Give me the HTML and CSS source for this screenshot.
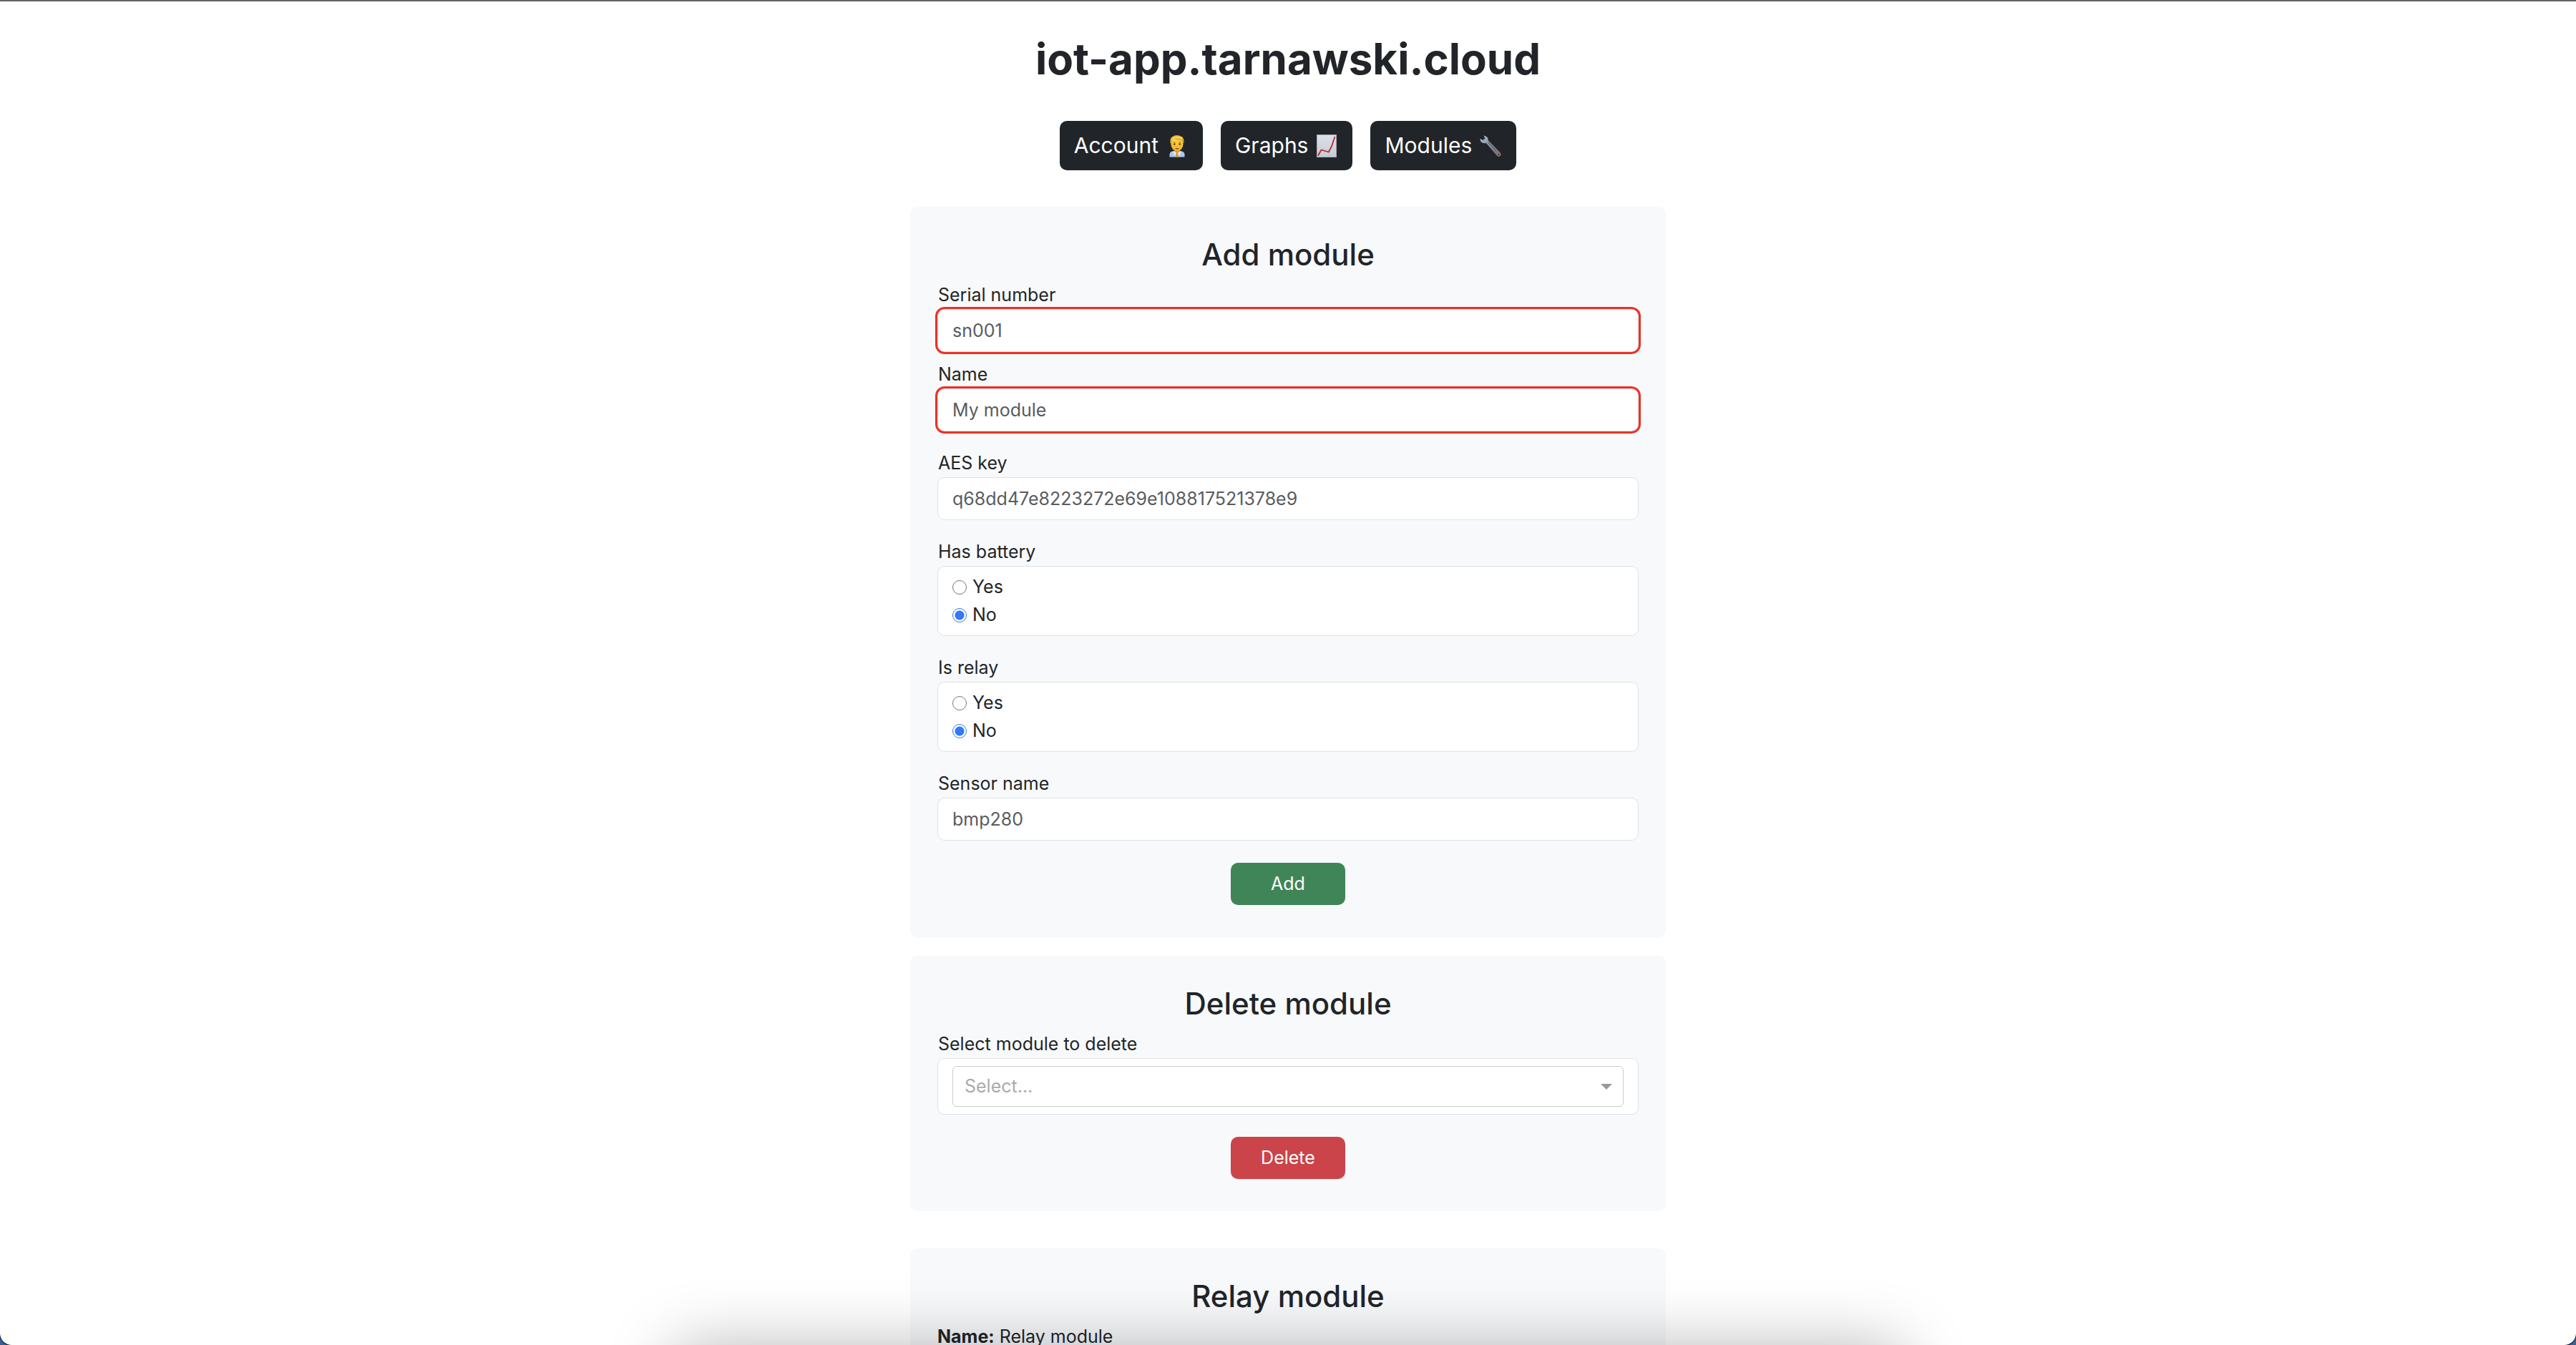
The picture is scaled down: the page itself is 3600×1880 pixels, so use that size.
FILE: index.html
```html
<!DOCTYPE html>
<html lang="en">
<head>
<meta charset="utf-8">
<title>iot-app.tarnawski.cloud</title>
<link rel="stylesheet" href="styles.css">
</head>
<body>
<div class="page">
  <header class="header">
    <h1 class="title">iot-app.tarnawski.cloud</h1>
    <nav class="nav">
      <a class="nav-link" href="#account">Account
        <svg class="emoji" viewBox="0 0 32 32" aria-hidden="true">
          <defs><linearGradient id="face" x1="0" y1="0" x2="0" y2="1"><stop offset="0" stop-color="#ffdc50"/><stop offset="1" stop-color="#efaa22"/></linearGradient></defs>
          <path d="M5.5 31.500v-3.500q0-4 5-4.800h11q5 .8 5 4.800v3.500z" fill="#a9c8ed"/>
          <path d="M12.500 20h7v4.500l-3.500 3-3.500-3z" fill="#d99a20"/>
          <ellipse cx="16" cy="13.500" rx="8.500" ry="10" fill="url(#face)"/>
          <path d="M6.800 13Q5.500 5 9.500 3q5.500-4 13 0 4 2.500 2.700 10l-1.500-4.500q-8 .5-12-2.500-2.500 2-3.200 4.500z" fill="#e8b632"/>
          <path d="M9 6.500q6-5 14-1" stroke="#f9dc78" stroke-width="1.500" fill="none"/>
          <path d="M10.500 11.200q1.500-1 3 0M18.500 11.200q1.500-1 3 0" stroke="#a36f16" fill="none"/>
          <circle cx="12.300" cy="13.500" r="1.200" fill="#40311e"/><circle cx="19.700" cy="13.500" r="1.200" fill="#40311e"/>
          <path d="M13 19.500q3-1 6 0-3 1.800-6 0z" fill="#7e4216"/>
          <path d="M11.500 23l4.500 3.500-3 3.500-3-5.500zM20.500 23L16 26.500l3 3.500 3-5.500z" fill="#dceaff"/>
          <path d="M14.800 26h2.400l1 5.500h-4.400z" fill="#d69b25"/>
        </svg>
      </a>
      <a class="nav-link" href="#graphs">Graphs
        <svg class="emoji" viewBox="0 0 32 32" aria-hidden="true">
          <defs><linearGradient id="paper" x1="0" y1="0" x2="0" y2="1"><stop offset="0" stop-color="#dde2ea"/><stop offset="1" stop-color="#c3c9d2"/></linearGradient></defs>
          <rect x="2.500" y=".5" width="27" height="31" fill="url(#paper)" stroke="#a3a9b3"/>
          <path d="M9.200 1v30M16 1v30M22.800 1v30M3 8.500h26M3 16h26M3 23.500h26" stroke="#d3dae4" stroke-width=".6"/>
          <path d="M4 29.500l4.500-8 10.500 3 4-8L27.500 3" fill="none" stroke="#bd2823" stroke-width="1.800"/>
        </svg>
      </a>
      <a class="nav-link" href="#modules">Modules
        <svg class="emoji" viewBox="0 0 32 32" aria-hidden="true">
          <defs><linearGradient id="steel" x1="0" y1="0" x2="1" y2="1"><stop offset="0" stop-color="#a9bccd"/><stop offset=".55" stop-color="#858b95"/><stop offset="1" stop-color="#76645f"/></linearGradient></defs>
          <path d="M6.500 1.200l4.500 2q2 1.500 1.800 5l17 17.300q1.800 2.500-.3 4.800-2.500 1.700-4.700-.8L10 12q-5 1-7.500-2L1 6l4.800 1.700 2.400-2.200z" fill="url(#steel)"/>
          <path d="M12.500 10.500l12 13" stroke="#57606d" stroke-width="1.200"/>
          <circle cx="27.500" cy="28" r="1.500" fill="#2a272a" stroke="#b1a09a" stroke-width=".6"/>
        </svg>
      </a>
    </nav>
  </header>

  <main class="content">
    <form class="card">
      <h2 class="card-title">Add module</h2>
      <div class="fields">
        <div class="field field-invalid">
          <label class="label" for="serial">Serial number</label>
          <input class="control" id="serial" type="text" placeholder="sn001">
        </div>
        <div class="field field-invalid">
          <label class="label" for="name">Name</label>
          <input class="control" id="name" type="text" placeholder="My module">
        </div>
        <div class="field">
          <label class="label" for="aes">AES key</label>
          <input class="control" id="aes" type="text" placeholder="q68dd47e8223272e69e108817521378e9">
        </div>
        <div class="field" role="radiogroup" aria-labelledby="battery">
          <span class="label" id="battery">Has battery</span>
          <div class="options">
            <label class="option"><input class="radio" type="radio" name="battery">Yes</label>
            <label class="option"><input class="radio" type="radio" name="battery" checked>No</label>
          </div>
        </div>
        <div class="field" role="radiogroup" aria-labelledby="relay">
          <span class="label" id="relay">Is relay</span>
          <div class="options">
            <label class="option"><input class="radio" type="radio" name="relay">Yes</label>
            <label class="option"><input class="radio" type="radio" name="relay" checked>No</label>
          </div>
        </div>
        <div class="field">
          <label class="label" for="sensor">Sensor name</label>
          <input class="control" id="sensor" type="text" placeholder="bmp280">
        </div>
      </div>
      <button class="button button-add" type="button">Add</button>
    </form>

    <form class="card">
      <h2 class="card-title">Delete module</h2>
      <div class="field">
        <label class="label" for="module">Select module to delete</label>
        <div class="select-box">
          <div class="select-wrap">
            <select class="select" id="module"><option>Select...</option></select>
          </div>
        </div>
      </div>
      <button class="button button-delete" type="button">Delete</button>
    </form>

    <section class="card card-module">
      <h2 class="card-title">Relay module</h2>
      <p class="detail"><strong>Name:</strong> Relay module</p>
    </section>
  </main>
</div>
<div class="dock-shadow"></div>
<div class="window-frame"></div>
</body>
</html>
```
FILE: styles.css
```css
* {
  box-sizing: border-box;
}

body {
  margin: 0;
  background: #fff;
  color: #212529;
  font-family: Inter, "Liberation Sans", sans-serif;
  font-size: 25px;
  line-height: 39px;
}

.page {
  height: 100vh;
  overflow: hidden;
  padding: 44px 24px 0;
}

.header {
  display: flex;
  flex-direction: column;
  align-items: center;
  gap: 48px;
}

.title {
  margin: 0;
  font-size: 60px;
  line-height: 77px;
  font-weight: 700;
}

.nav {
  display: flex;
  gap: 25px;
}

.nav-link {
  display: flex;
  align-items: center;
  gap: 10px;
  padding: 10px 20px;
  border-radius: 10px;
  background: #212529;
  color: #fff;
  font-size: 30px;
  line-height: 49px;
  text-decoration: none;
}

.emoji {
  width: 32px;
  height: 32px;
}

.content {
  display: flex;
  flex-direction: column;
  gap: 26px;
  max-width: 1056px;
  margin: 51px auto 0;
}

.card {
  display: flex;
  flex-direction: column;
  padding: 40px 38px 45px;
  border-radius: 10px;
  background: #f8f9fb;
}

.card-module {
  margin-top: 26px;
}

.card-title {
  margin: 0 0 11px;
  font-size: 42px;
  line-height: 53px;
  font-weight: 500;
  text-align: center;
}

.fields {
  display: flex;
  flex-direction: column;
  gap: 25px;
}

.field {
  display: flex;
  flex-direction: column;
}

.field-invalid + .field-invalid {
  margin-top: -13px;
}

.label {
  padding-left: 1px;
}

.control,
.options,
.select-box {
  width: 100%;
  border: 1px solid #dee2e6;
  border-radius: 10px;
  background: #fff;
}

.control {
  height: 60px;
  padding: 0 20px;
  color: #212529;
  font: inherit;
}

.control::placeholder {
  color: #595c5f;
  opacity: 1;
}

.field-invalid .control {
  outline: 3px solid #ee3124;
}

.options {
  display: flex;
  flex-direction: column;
  padding: 9px 20px;
}

.option {
  display: flex;
  align-items: center;
  gap: 8px;
}

.radio {
  appearance: none;
  width: 20px;
  height: 20px;
  margin: 0;
  border: 1px solid #767676;
  border-radius: 50%;
  background: #fff;
}

.radio:checked {
  border-color: #3478f6;
  background: radial-gradient(circle, #3478f6 6px, #fff 7px);
}

.select-box {
  padding: 10px 20px;
}

.select-wrap {
  display: flex;
  align-items: center;
  position: relative;
}

.select {
  appearance: none;
  width: 100%;
  height: 57px;
  padding: 0 16px;
  border: 1px solid #ccc;
  border-radius: 6px;
  background: #fff;
  color: #aaa;
  font: inherit;
}

.select-wrap::after {
  content: "";
  position: absolute;
  right: 16px;
  border: 8px solid transparent;
  border-top-color: #999;
  border-bottom: 0;
}

.button {
  align-self: center;
  width: 160px;
  height: 59px;
  margin-top: 31px;
  border: 0;
  border-radius: 10px;
  color: #fff;
  font: inherit;
}

.button-add {
  background: #408558;
}

.button-delete {
  background: #ca444a;
}

.detail {
  margin: 0;
}

/* Soft shadow rising from the dock under the window */
.dock-shadow {
  position: fixed;
  top: 100%;
  left: 26%;
  right: 26%;
  height: 200px;
  border-radius: 40px;
  box-shadow: 0 0 90px rgba(0, 0, 0, 0.27);
  pointer-events: none;
}

/* Window edge with the desktop behind its lower corners */
.window-frame {
  position: fixed;
  inset: 0;
  border-top: 2px solid #666465;
  border-radius: 0 0 16px 16px;
  box-shadow: 0 0 0 1px #14202f, 0 0 0 20px #3a6095;
  pointer-events: none;
}
```
